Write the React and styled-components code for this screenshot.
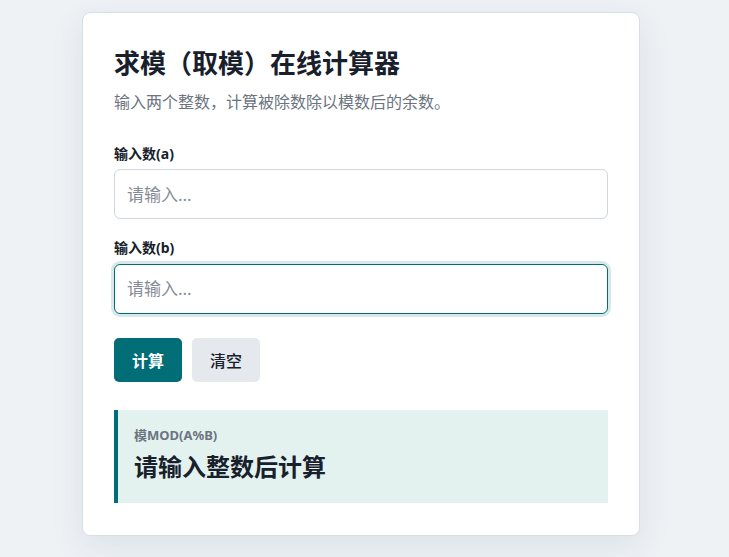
import React, { useState } from "react";
import styled, { createGlobalStyle } from "styled-components";

const GlobalStyle = createGlobalStyle`
  * { box-sizing: border-box; }
  html, body {
    margin: 0;
    padding: 0;
    background: #eef2f5;
    font-family: "Noto Sans", "Noto Sans CJK SC", sans-serif;
    color: #1a202c;
  }
`;

const Page = styled.main`
  display: flex;
  justify-content: center;
  align-items: flex-start;
  padding: 12px 7px 40px 0;
  min-height: 100vh;
`;

const Card = styled.section`
  width: 558px;
  background: #ffffff;
  border: 1px solid #d8dee6;
  border-radius: 8px;
  padding: 34px 31px 32px;
  box-shadow: 0 10px 34px rgba(30, 60, 90, 0.09);
`;

const Title = styled.h1`
  margin: 0;
  font-size: 26px;
  line-height: 1.3;
  font-weight: 700;
  color: #17202b;
`;

const Subtitle = styled.p`
  margin: 9px 0 0;
  font-size: 16px;
  line-height: 1.5;
  color: #6b7480;
`;

const Form = styled.div`
  display: flex;
  flex-direction: column;
  gap: 19px;
  margin-top: 30px;
`;

const Field = styled.div`
  display: flex;
  flex-direction: column;
  gap: 6px;
`;

const Label = styled.label`
  font-size: 14px;
  line-height: 1.4;
  font-weight: 700;
  color: #17202b;
`;

const Input = styled.input`
  height: 50px;
  width: 100%;
  padding: 0 12px;
  font-family: inherit;
  font-size: 17px;
  color: #17202b;
  background: #fff;
  border: 1px solid ${(p) => (p.$focused ? "#006d77" : "#cfd6de")};
  border-radius: 6px;
  outline: none;
  box-shadow: ${(p) => (p.$focused ? "0 0 0 3px rgba(0, 109, 119, 0.16)" : "none")};
  &::placeholder { color: #868c95; }
`;

const Actions = styled.div`
  display: flex;
  gap: 10px;
  margin-top: 24px;
`;

const Button = styled.button`
  height: 44px;
  padding: 0 18px;
  border: none;
  border-radius: 5px;
  font-family: inherit;
  font-size: 16px;
  font-weight: ${(p) => (p.$primary ? 700 : 500)};
  color: ${(p) => (p.$primary ? "#ffffff" : "#17202b")};
  background: ${(p) => (p.$primary ? "#006d77" : "#e5e9ee")};
  cursor: pointer;
`;

const Result = styled.div`
  margin-top: 28px;
  background: #e3f2ef;
  border-left: 4px solid #006d77;
  padding: 16px 20px 19px 16px;
  display: flex;
  flex-direction: column;
  gap: 6px;
`;

const ResultLabel = styled.div`
  font-size: 13px;
  line-height: 1.4;
  font-weight: 700;
  color: #6b7480;
`;

const ResultValue = styled.div`
  font-size: 24px;
  line-height: 1.4;
  font-weight: 700;
  color: #17202b;
`;

export default function App() {
  const [a, setA] = useState("");
  const [b, setB] = useState("");
  const [result, setResult] = useState("请输入整数后计算");

  const compute = () => {
    const x = parseInt(a, 10);
    const y = parseInt(b, 10);
    if (Number.isNaN(x) || Number.isNaN(y)) {
      setResult("请输入整数后计算");
    } else if (y === 0) {
      setResult("模数不能为 0");
    } else {
      setResult(String(x % y));
    }
  };

  const clear = () => {
    setA("");
    setB("");
    setResult("请输入整数后计算");
  };

  return (
    <>
      <GlobalStyle />
      <Page>
        <Card>
          <Title>求模（取模）在线计算器</Title>
          <Subtitle>输入两个整数，计算被除数除以模数后的余数。</Subtitle>
          <Form>
            <Field>
              <Label htmlFor="num-a">输入数(a)</Label>
              <Input id="num-a" placeholder="请输入..." value={a} onChange={(e) => setA(e.target.value)} />
            </Field>
            <Field>
              <Label htmlFor="num-b">输入数(b)</Label>
              <Input id="num-b" $focused placeholder="请输入..." value={b} onChange={(e) => setB(e.target.value)} />
            </Field>
          </Form>
          <Actions>
            <Button $primary onClick={compute}>计算</Button>
            <Button onClick={clear}>清空</Button>
          </Actions>
          <Result>
            <ResultLabel>模MOD(A%B)</ResultLabel>
            <ResultValue>{result}</ResultValue>
          </Result>
        </Card>
      </Page>
    </>
  );
}
